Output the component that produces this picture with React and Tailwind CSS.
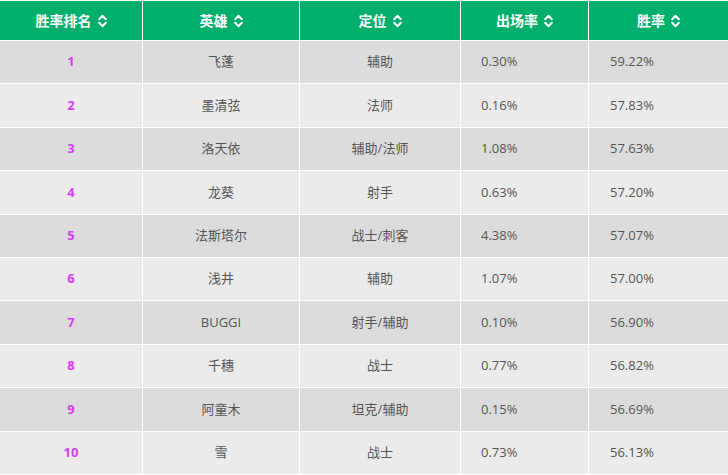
const rows = [
  { rank: 1, hero: "飞蓬", role: "辅助", pick: "0.30%", win: "59.22%" },
  { rank: 2, hero: "墨清弦", role: "法师", pick: "0.16%", win: "57.83%" },
  { rank: 3, hero: "洛天依", role: "辅助/法师", pick: "1.08%", win: "57.63%" },
  { rank: 4, hero: "龙葵", role: "射手", pick: "0.63%", win: "57.20%" },
  { rank: 5, hero: "法斯塔尔", role: "战士/刺客", pick: "4.38%", win: "57.07%" },
  { rank: 6, hero: "浅井", role: "辅助", pick: "1.07%", win: "57.00%" },
  { rank: 7, hero: "BUGGI", role: "射手/辅助", pick: "0.10%", win: "56.90%" },
  { rank: 8, hero: "千穗", role: "战士", pick: "0.77%", win: "56.82%" },
  { rank: 9, hero: "阿童木", role: "坦克/辅助", pick: "0.15%", win: "56.69%" },
  { rank: 10, hero: "雪", role: "战士", pick: "0.73%", win: "56.13%" },
];

const headers = ["胜率排名", "英雄", "定位", "出场率", "胜率"];

function SortIcon() {
  return (
    <svg width="9" height="14" viewBox="0 0 9 14" fill="none" className="shrink-0">
      <path d="M1.2 5.2 L4.5 1.8 L7.8 5.2" stroke="white" strokeWidth="2" strokeLinecap="round" strokeLinejoin="round" />
      <path d="M1.2 8.8 L4.5 12.2 L7.8 8.8" stroke="white" strokeWidth="2" strokeLinecap="round" strokeLinejoin="round" />
    </svg>
  );
}

const cols = "grid grid-cols-[142px_156px_160px_127px_139px] gap-x-px";

export default function App() {
  return (
    <div
      className="w-[728px] bg-white flex flex-col gap-y-px pt-px"
      style={{ fontFamily: '"Open Sans", "Noto Sans CJK SC", sans-serif' }}
    >
      {/* Header */}
      <div className={cols}>
        {headers.map((h) => (
          <div
            key={h}
            className="h-[39px] bg-[#00af6b] flex items-center justify-center gap-[6px] text-white text-[14px] font-bold"
          >
            <span>{h}</span>
            <SortIcon />
          </div>
        ))}
      </div>

      {/* Rows */}
      {rows.map((r, i) => {
        const bg = i % 2 === 0 ? "bg-[#dcdcdc]" : "bg-[#ebebeb]";
        return (
          <div key={r.rank} className={cols}>
            <div className={`${bg} h-[42.4px] flex items-center justify-center text-[13px] font-bold text-[#d63cf5]`}>
              {r.rank}
            </div>
            <div className={`${bg} h-[42.4px] flex items-center justify-center text-[13px] text-[#555]`}>
              {r.hero}
            </div>
            <div className={`${bg} h-[42.4px] flex items-center justify-center text-[13px] text-[#555]`}>
              {r.role}
            </div>
            <div className={`${bg} h-[42.4px] flex items-center pl-[20px] text-[13px] text-[#555]`}>
              {r.pick}
            </div>
            <div className={`${bg} h-[42.4px] flex items-center pl-[21px] text-[13px] text-[#555]`}>
              {r.win}
            </div>
          </div>
        );
      })}
    </div>
  );
}
